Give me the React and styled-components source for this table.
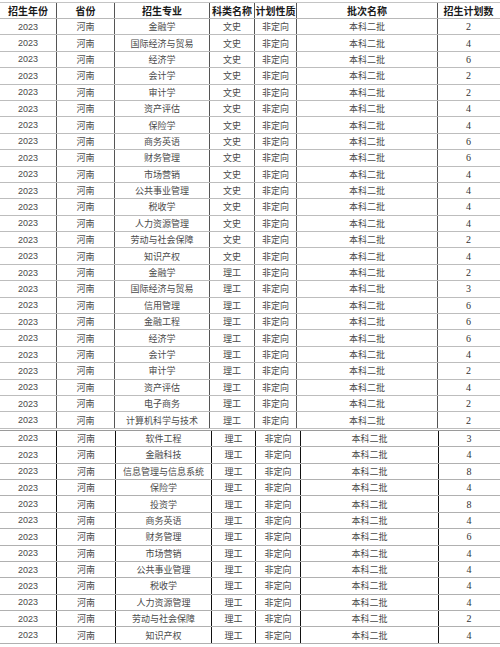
import React from 'react'
import styled, { createGlobalStyle } from 'styled-components'

const Global = createGlobalStyle`
  html, body { margin: 0; padding: 0; background: #fff; }
  * { box-sizing: border-box; }
`

const Page = styled.div`
  width: 500px;
  padding-top: 2px;
  font-family: "Noto Sans CJK SC", "Liberation Sans", sans-serif;
`

const Section = styled.div`
  border-top: 1px solid ${p => p.$line};
  margin-top: ${p => p.$gap || 0}px;
`

const Row = styled.div`
  display: flex;
  height: ${p => p.$h}px;
  border-bottom: 1px solid ${p => p.$line};
`

const Cell = styled.div`
  flex: 0 0 ${p => p.$w}px;
  display: flex;
  align-items: center;
  justify-content: center;
  border-right: ${p => (p.$last ? 'none' : `1px solid ${p.$rule}`)};
  font-size: 9px;
  color: #4a4a4a;
  white-space: nowrap;
  overflow: hidden;
`

const HeadCell = styled(Cell)`
  font-size: 10px;
  font-weight: 700;
  color: #1a1a1a;
`

const Year = styled.span`
  font-family: "Liberation Sans", sans-serif;
  font-size: 9px;
`

const Num = styled.span`
  font-family: "Liberation Serif", serif;
  font-size: 10px;
  color: #333;
`

const cols1 = [57, 58, 95, 45, 42, 141, 61]
const cols2 = [57, 59, 96, 44, 45, 138, 60]

const headers = ['招生年份', '省份', '招生专业', '科类名称', '计划性质', '批次名称', '招生计划数']

const part1 = [
  ['金融学', '文史', 2],
  ['国际经济与贸易', '文史', 4],
  ['经济学', '文史', 6],
  ['会计学', '文史', 2],
  ['审计学', '文史', 2],
  ['资产评估', '文史', 4],
  ['保险学', '文史', 4],
  ['商务英语', '文史', 6],
  ['财务管理', '文史', 6],
  ['市场营销', '文史', 4],
  ['公共事业管理', '文史', 4],
  ['税收学', '文史', 4],
  ['人力资源管理', '文史', 4],
  ['劳动与社会保障', '文史', 2],
  ['知识产权', '文史', 4],
  ['金融学', '理工', 2],
  ['国际经济与贸易', '理工', 3],
  ['信用管理', '理工', 6],
  ['金融工程', '理工', 6],
  ['经济学', '理工', 6],
  ['会计学', '理工', 4],
  ['审计学', '理工', 2],
  ['资产评估', '理工', 4],
  ['电子商务', '理工', 2],
  ['计算机科学与技术', '理工', 2],
]

const part2 = [
  ['软件工程', '理工', 3],
  ['金融科技', '理工', 4],
  ['信息管理与信息系统', '理工', 8],
  ['保险学', '理工', 4],
  ['投资学', '理工', 8],
  ['商务英语', '理工', 4],
  ['财务管理', '理工', 6],
  ['市场营销', '理工', 4],
  ['公共事业管理', '理工', 4],
  ['税收学', '理工', 4],
  ['人力资源管理', '理工', 4],
  ['劳动与社会保障', '理工', 2],
  ['知识产权', '理工', 4],
]

const DataRow = ({ item, cols, rule, line }) => {
  const values = [
    <Year>2023</Year>,
    '河南',
    item[0],
    item[1],
    '非定向',
    '本科二批',
    <Num>{item[2]}</Num>,
  ]
  return (
    <Row $h={16.4} $line={line}>
      {values.map((v, i) => (
        <Cell key={i} $w={cols[i]} $rule={rule} $last={i === cols.length - 1}>
          {v}
        </Cell>
      ))}
    </Row>
  )
}

const App = () => (
  <>
    <Global />
    <Page>
      <Section $line="#c4c4c4">
        <Row $h={16} $line="#b8b8b8">
          {headers.map((h, i) => (
            <HeadCell key={h} $w={cols1[i]} $rule="#555" $last={i === 6}>
              {h}
            </HeadCell>
          ))}
        </Row>
        {part1.map((item, i) => (
          <DataRow key={i} item={item} cols={cols1} rule="#555" line="#bdbdbd" />
        ))}
      </Section>
      <Section $line="#9a9a9a" $gap={1}>
        {part2.map((item, i) => (
          <DataRow key={i} item={item} cols={cols2} rule="#111" line="#b0b0b0" />
        ))}
      </Section>
    </Page>
  </>
)

export default App
